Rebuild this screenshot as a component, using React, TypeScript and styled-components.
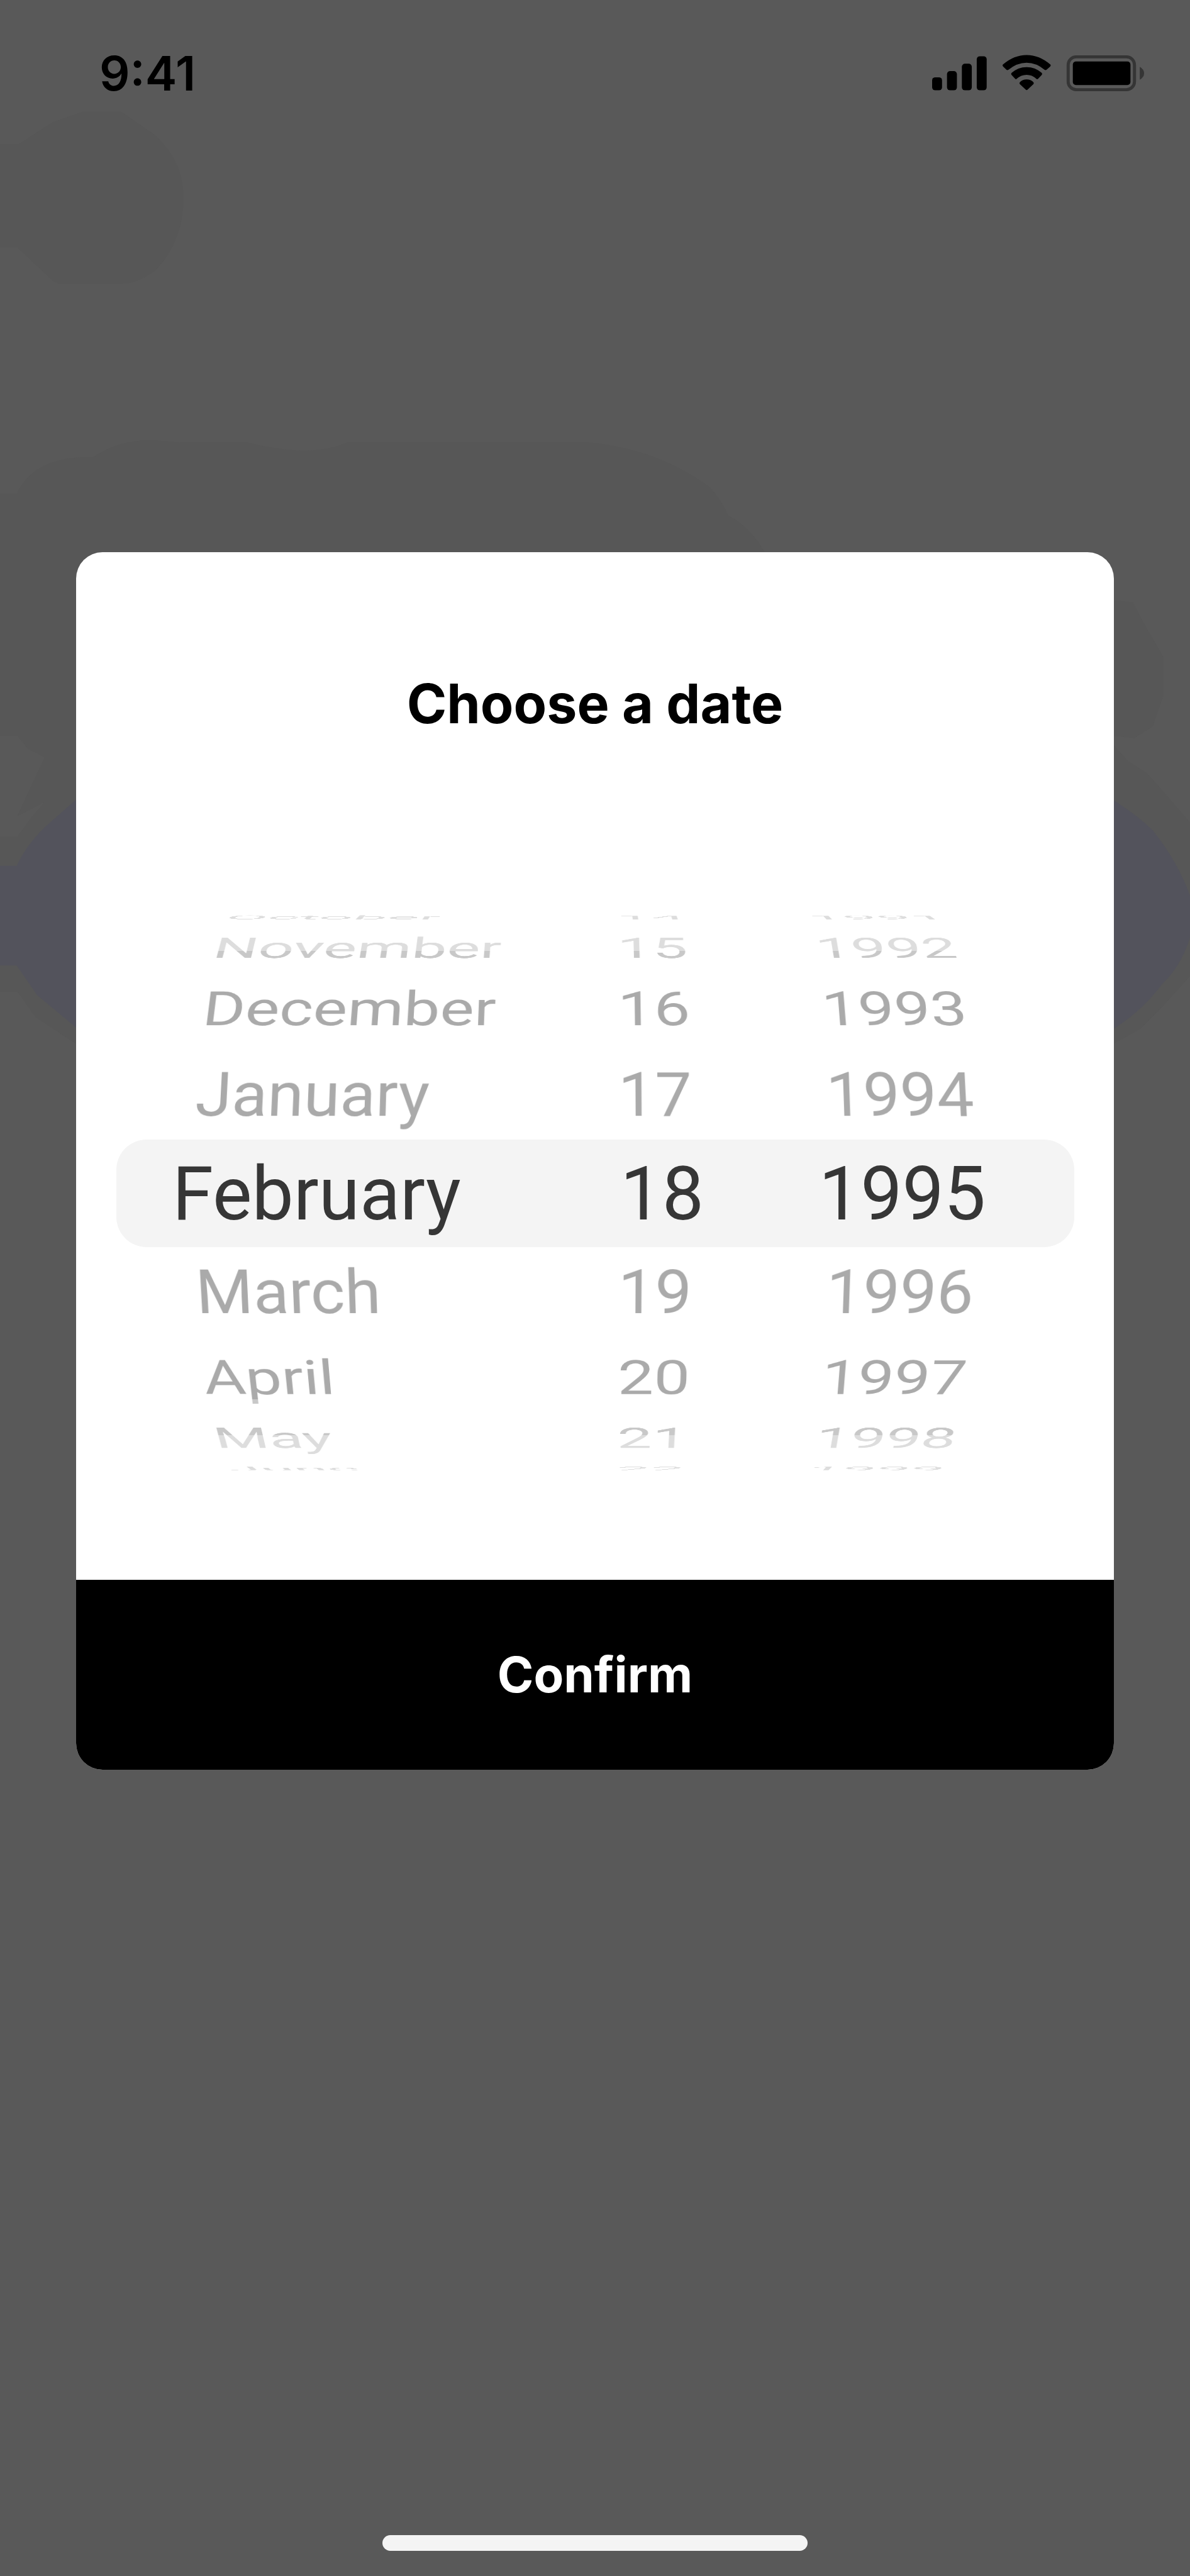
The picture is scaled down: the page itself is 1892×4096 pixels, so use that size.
import React, { useState } from "react";
import styled, { createGlobalStyle } from "styled-components";

const SANS = `Inter, "Liberation Sans", sans-serif`;
const WHEEL_SANS = `Roboto, "Liberation Sans", sans-serif`;

const GlobalStyle = createGlobalStyle`
  *, *::before, *::after { box-sizing: border-box; }
  body { margin: 0; background: #595959; font-family: ${SANS}; }
`;

const Screen = styled.div`
  position: relative;
  display: flex;
  flex-direction: column;
  min-height: 100vh;
  background: #595959;
  overflow: hidden;
`;

const Backdrop = styled.svg`
  position: absolute;
  top: 0;
  left: 0;
  width: 100%;
`;

const StatusBar = styled.header`
  position: relative;
  display: flex;
  align-items: center;
  justify-content: space-between;
  height: 232px;
  padding: 0 72px 0 158px;
`;

const Clock = styled.time`
  font-size: 76px;
  font-weight: 600;
  line-height: 90px;
  color: #000;
`;

const StatusIcons = styled.svg`
  width: 338px;
  height: 60px;
`;

const Dialog = styled.main`
  position: relative;
  display: flex;
  flex-direction: column;
  margin: 646px 121px 0;
  border-radius: 42px;
  background: #fff;
  overflow: hidden;
`;

const Title = styled.h1`
  margin: 0;
  padding: 186px 0 0;
  font-size: 86px;
  font-weight: 700;
  line-height: 110px;
  text-align: center;
  color: #000;
`;

const Picker = styled.div`
  position: relative;
  display: grid;
  margin: 277px 63px 169px 64px;
`;

const Highlight = styled.div`
  grid-area: 1 / 1;
  align-self: center;
  height: 171px;
  border-radius: 48px;
  background: #f4f4f4;
`;

/* Fades the rows in steps towards the rim of the drum. */
const Fade = styled.div`
  grid-area: 1 / 1;
  mask-image: linear-gradient(
    rgba(0, 0, 0, 0.3) 6px,
    rgba(0, 0, 0, 0.4) 6px 61px,
    rgba(0, 0, 0, 0.65) 61px 118px,
    #000 118px 774px,
    rgba(0, 0, 0, 0.65) 774px 831px,
    rgba(0, 0, 0, 0.4) 831px 886px,
    rgba(0, 0, 0, 0.3) 886px
  );
`;

const Drum = styled.div`
  display: grid;
  grid-template-columns: 1fr 260px 587px;
  height: 892px;
  perspective: 4200px;
  overflow: hidden;
  font-family: ${WHEEL_SANS};
`;

type Align = "start" | "end" | "center";

const Wheel = styled.ul<{ $align: Align }>`
  display: grid;
  align-items: center;
  justify-items: ${(p) => p.$align};
  margin: 0;
  padding: 0 0 0 ${(p) => (p.$align === "center" ? 40 : 0)}px;
  list-style: none;
  transform-style: preserve-3d;
`;

const inset = {
  start: { selected: "4px 0 0 89px", resting: "4px 0 0 122px" },
  end: { selected: "4px 2px 0 0", resting: "4px 20px 0 0" },
  center: { selected: "4px 0 0", resting: "4px 0 0" },
};

const Row = styled.li<{ $selected: boolean; $align: Align }>`
  grid-area: 1 / 1;
  padding: ${(p) => inset[p.$align][p.$selected ? "selected" : "resting"]};
  font-size: ${(p) => (p.$selected ? 118 : 105)}px;
  line-height: 140px;
  white-space: nowrap;
  color: ${(p) => (p.$selected ? "#363636" : "#aaa")};
  cursor: pointer;
`;

const Confirm = styled.button`
  height: 302px;
  padding: 0;
  border: 0;
  background: #000;
  color: #fff;
  font-family: inherit;
  font-size: 78px;
  font-weight: 700;
  line-height: 100px;
`;

const HomeBar = styled.div`
  position: relative;
  width: 676px;
  height: 25px;
  margin: auto auto 40px;
  border-radius: 13px;
  background: #f4f4f4;
`;

/* Place of a row on the drum, by its distance from the selected row. */
const DRUM = [
  { shift: 0, depth: 0, tilt: 0 },
  { shift: 158, depth: 28, tilt: 20 },
  { shift: 301, depth: 110, tilt: 39 },
  { shift: 411, depth: 230, tilt: 58 },
  { shift: 478, depth: 380, tilt: 79 },
];

const MONTHS = [
  "January", "February", "March", "April", "May", "June",
  "July", "August", "September", "October", "November", "December",
];
const DAYS = Array.from({ length: 31 }, (_, i) => String(i + 1));
const YEARS = Array.from({ length: 120 }, (_, i) => String(1920 + i));

interface WheelProps {
  label: string;
  items: string[];
  initial: string;
  align: Align;
}

function WheelColumn({ label, items, initial, align }: WheelProps) {
  const [index, setIndex] = useState(items.indexOf(initial));
  const last = DRUM.length - 1;
  const offsets = Array.from({ length: last * 2 + 1 }, (_, i) => i - last);

  return (
    <Wheel role="listbox" aria-label={label} $align={align}>
      {offsets.map((offset) => {
        const at = (index + offset + items.length) % items.length;
        const { shift, depth, tilt } = DRUM[Math.abs(offset)];
        const side = Math.sign(offset);
        return (
          <Row
            key={items[at]}
            role="option"
            aria-selected={offset === 0}
            $selected={offset === 0}
            $align={align}
            onClick={() => setIndex(at)}
            style={
              offset === 0
                ? undefined
                : { transform: `translate3d(0, ${side * shift}px, ${-depth}px) rotateX(${-side * tilt}deg)` }
            }
          >
            {items[at]}
          </Row>
        );
      })}
    </Wheel>
  );
}

export default function App() {
  return (
    <>
      <GlobalStyle />
      <Screen>
        <Backdrop viewBox="0 0 1920 4157" aria-hidden="true">
          <path
            fill="#575757"
            d="M0 233H30L85 197L135 180H195L250 218Q296 260 296 319Q296 390 250 437Q220 458 195 458H95L85 453L28 399H0Z"
          />
          <path
            fill="#575757"
            d="M0 797H27Q55 735 150 738Q190 710 245 710L290 714H400Q500 740 560 714H950Q1060 724 1145 786Q1165 808 1175 832Q1210 850 1233 890V1684H122L57 1641L28 1600H0V1350H28L50 1320L72 1294L28 1317L45 1280L72 1222L45 1208L28 1187H0Z"
          />
          <path
            fill="#575757"
            d="M1790 968L1828 972L1845 1005L1877 1060V1122L1860 1172L1830 1191L1790 1187Z"
          />
          <path
            fill="#575757"
            d="M1790 1195L1820 1228L1850 1247L1875 1275L1920 1327V1575L1875 1625L1840 1660L1790 1688Z"
          />
          <path
            fill="#53535c"
            d="M130 1284L82 1326Q45 1358 27 1397H0V1558H27L60 1606L130 1664Z"
          />
          <path
            fill="#53535c"
            d="M1790 1287Q1835 1315 1860 1340Q1900 1390 1920 1445V1513Q1905 1560 1875 1588Q1840 1635 1790 1664Z"
          />
        </Backdrop>

        <StatusBar>
          <Clock>9:41</Clock>
          <StatusIcons viewBox="0 0 343 60" role="img" aria-label="Signal, Wi-Fi, battery">
            <rect x="0" y="37" width="16" height="21" rx="5" />
            <rect x="24" y="27" width="16" height="31" rx="5" />
            <rect x="48" y="15" width="16" height="43" rx="5" />
            <rect x="72" y="3" width="16" height="55" rx="5" />
            <path d="M114 16.500Q132 1 152.500 1T191 16.500Q192 18 190.500 19.500L184.500 25Q183 26 181.500 25Q168 13.500 152.500 13.500T123 25Q121.500 26 120 25L114.500 19.500Q113 18 114 16.500Z" />
            <path d="M128 30Q138.500 20.500 152.500 20.500T177 30Q178 31.500 177 33L171 39.500Q169.500 41 168 39.500Q161.500 33 152.500 33T136.500 39.500Q135 41 134 39.500L128 33Q127 31.500 128 30Z" />
            <path d="M142 44.500Q146 40.500 152.500 40.500T163 44.500Q165 46.500 163.500 48L154 57Q152.500 58.500 151 57L141.500 48Q140 46.500 142 44.500Z" />
            <rect x="219.500" y="4" width="107" height="53" rx="13" fill="none" stroke="#353535" strokeWidth="5" />
            <rect x="227" y="11.500" width="93" height="38" rx="5" />
            <path fill="#353535" d="M335 20Q342 24 342 30.500T335 41Z" />
          </StatusIcons>
        </StatusBar>

        <Dialog>
          <Title>Choose a date</Title>
          <Picker>
            <Highlight />
            <Fade>
              <Drum>
                <WheelColumn label="Month" items={MONTHS} initial="February" align="start" />
                <WheelColumn label="Day" items={DAYS} initial="18" align="end" />
                <WheelColumn label="Year" items={YEARS} initial="1995" align="center" />
              </Drum>
            </Fade>
          </Picker>
          <Confirm type="button">Confirm</Confirm>
        </Dialog>

        <HomeBar />
      </Screen>
    </>
  );
}
